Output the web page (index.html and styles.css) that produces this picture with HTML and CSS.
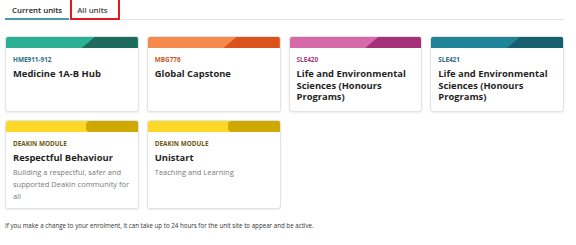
FILE: index.html
```html
<html lang="en">
<head>
    <meta charset="UTF-8">
    <meta name="viewport" content="width=device-width, initial-scale=1.0">
    <title>My units</title>
    <link rel="stylesheet" href="styles.css">
</head>
<body>

    <!-- Tabs -->
    <div class="tabs">
        <div class="tab active">Current units</div>
        <div class="tab highlighted">All units</div>
    </div>

    <!-- Unit cards -->
    <div class="unit-grid">
        <div class="unit-card teal">
            <div class="band"></div>
            <div class="card-body">
                <div class="unit-code">HME911-912</div>
                <div class="unit-title">Medicine 1A-B Hub</div>
            </div>
        </div>
        <div class="unit-card orange">
            <div class="band"></div>
            <div class="card-body">
                <div class="unit-code">MBG776</div>
                <div class="unit-title">Global Capstone</div>
            </div>
        </div>
        <div class="unit-card pink">
            <div class="band"></div>
            <div class="card-body">
                <div class="unit-code">SLE420</div>
                <div class="unit-title">Life and Environmental Sciences (Honours Programs)</div>
            </div>
        </div>
        <div class="unit-card blue">
            <div class="band"></div>
            <div class="card-body">
                <div class="unit-code">SLE421</div>
                <div class="unit-title">Life and Environmental Sciences (Honours Programs)</div>
            </div>
        </div>
        <div class="unit-card yellow">
            <div class="band"></div>
            <div class="card-body">
                <div class="unit-code">DEAKIN MODULE</div>
                <div class="unit-title">Respectful Behaviour</div>
                <div class="unit-desc">Building a respectful, safer and supported Deakin community for all</div>
            </div>
        </div>
        <div class="unit-card yellow">
            <div class="band"></div>
            <div class="card-body">
                <div class="unit-code">DEAKIN MODULE</div>
                <div class="unit-title">Unistart</div>
                <div class="unit-desc">Teaching and Learning</div>
            </div>
        </div>
    </div>

    <p class="note">If you make a change to your enrolment, it can take up to 24 hours for the unit site to appear and be active.</p>

</body>
</html>
```

FILE: styles.css
```css
/* Basic styling */
body {
    font-family: "Open Sans", "Liberation Sans", sans-serif;
    background-color: #fff;
    color: #222;
    margin: 0;
    padding: 0 12px 0 5px;
}

/* Tabs */
.tabs {
    display: flex;
    border-bottom: 1px solid #e6e6e6;
    height: 19px;
}

.tab {
    font-size: 7.8px;
    font-weight: 600;
    padding: 5px 7px 0;
    color: #444;
    box-sizing: border-box;
    height: 20px;
}

.tab.active {
    color: #222;
    border-bottom: 2px solid #4a9aa8;
}

.tab.highlighted {
    border: 2px solid #e01b24;
    border-top: none;
    padding: 5px 10px 0 5px;
    margin-left: 1px;
}

/* Card grid */
.unit-grid {
    display: grid;
    grid-template-columns: repeat(4, 1fr);
    gap: 8px 8px;
    margin-top: 16px;
}

.unit-card {
    box-sizing: border-box;
    border: 1px solid #e3e3e3;
    border-radius: 3px;
    background: #fff;
    box-shadow: 0 1px 2px rgba(0, 0, 0, 0.08);
    overflow: hidden;
    min-height: 76px;
}

/* Coloured band with darker slanted end */
.band {
    height: 11px;
    position: relative;
    background: var(--light);
}

.band::after {
    content: '';
    position: absolute;
    right: 0;
    top: 0;
    bottom: 0;
    width: 56px;
    background: var(--dark);
    clip-path: polygon(13px 0, 100% 0, 100% 100%, 0 100%);
}

.teal { --light: #2bb093; --dark: #1d6b5d; --code: #2a6b80; }
.orange { --light: #f68a4d; --dark: #d9531a; --code: #c25a2e; }
.pink { --light: #d46aa9; --dark: #a7307a; --code: #a23a7a; }
.blue { --light: #1f8497; --dark: #165f6e; --code: #2a6b80; }
.yellow { --light: #fdd826; --dark: #cda901; --code: #6e5714; }

.yellow .band::after {
    width: 52px;
    clip-path: none;
    border-radius: 4px 0 0 4px;
}

.card-body {
    padding: 7px 8px 6px 7px;
}

.unit-code {
    font-size: 6.4px;
    font-weight: 700;
    line-height: 10px;
    color: var(--code);
}

.unit-title {
    font-size: 9.4px;
    font-weight: 700;
    line-height: 11.5px;
    margin-top: 3px;
    color: #1f1f1f;
}

.unit-desc {
    font-size: 7.5px;
    line-height: 12px;
    color: #7a7a7a;
    margin-top: 2px;
}

/* Footer note */
.note {
    font-size: 6.2px;
    color: #333;
    margin: 12px 0 0;
}
```
